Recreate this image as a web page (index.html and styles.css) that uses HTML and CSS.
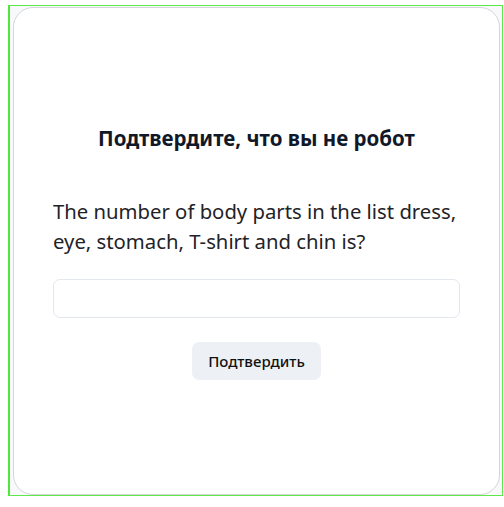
FILE: index.html
```html
<!DOCTYPE html>
<html lang="ru">
<head>
<meta charset="utf-8">
<link rel="stylesheet" href="styles.css">
</head>
<body>
<div class="frame">
  <div class="card">
    <h1 class="title">Подтвердите, что вы не робот</h1>
    <p class="question">The number of body parts in the list dress, eye, stomach, T-shirt and chin is?</p>
    <input class="answer" type="text" aria-label="answer">
    <button class="submit" type="button">Подтвердить</button>
  </div>
</div>
</body>
</html>
```
FILE: styles.css
```css
html, body {
  margin: 0;
  padding: 0;
  background: #ffffff;
}
body {
  font-family: "Noto Sans", "Open Sans", sans-serif;
}
.frame {
  box-sizing: border-box;
  margin: 5px 0 0 8px;
  width: 495px;
  height: 491px;
  border: 1px solid #5ee84a;
  border-left: 2px solid #4fe83a;
  background: #f8f9fb;
  padding: 1px 2px 0 3px;
}
.card {
  box-sizing: border-box;
  height: 488px;
  background: #ffffff;
  border: 1px solid #d4d6da;
  border-radius: 20px;
  padding: 2px 39px 0 39px;
  display: flex;
  flex-direction: column;
  align-items: center;
  justify-content: center;
}
.title {
  margin: 0 0 44px;
  font-size: 20.5px;
  font-weight: 700;
  color: #111827;
  line-height: 28px;
}
.question {
  margin: 0 -20px 23px 0;
  align-self: stretch;
  font-size: 20.3px;
  line-height: 30px;
  color: #1f2328;
  font-weight: 400;
}
.answer {
  box-sizing: border-box;
  align-self: stretch;
  height: 39px;
  border: 1px solid #e3e7ef;
  border-radius: 7px;
  background: #fff;
  margin: 0 0 24px;
  font: inherit;
}
.submit {
  height: 38px;
  padding: 0 16px;
  border: none;
  border-radius: 7px;
  background: #edf1f5;
  color: #111;
  font-family: "Noto Sans", sans-serif;
  font-size: 15px;
  font-weight: 500;
}
```
